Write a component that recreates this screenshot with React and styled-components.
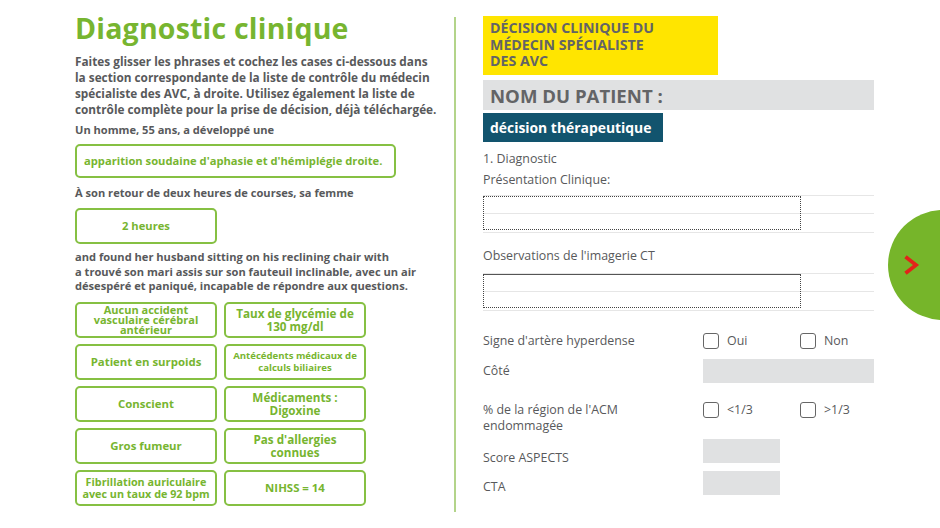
import React from "react";
import styled, { createGlobalStyle } from "styled-components";

const GlobalStyle = createGlobalStyle`
	html, body {
		margin: 0;
		padding: 0;
		background: #fff;
	}
	body {
		font-family: "Open Sans", "Liberation Sans", sans-serif;
		color: #58595b;
	}
`;

const GREEN = "#77b530";
const GREY = "#58595b";

const Page = styled.div`
	position: relative;
	display: flex;
	width: 940px;
	height: 528px;
	overflow: hidden;
`;

const LeftCol = styled.div`
	flex: none;
	width: 379px;
	margin-left: 75px;
	padding-top: 10px;
	box-sizing: border-box;
`;

const Title = styled.h1`
	margin: 0;
	font-size: 28.5px;
	line-height: 36px;
	font-weight: 700;
	color: ${GREEN};
	letter-spacing: 0.2px;
`;

const Para = styled.p`
	margin: ${p => p.margin || "0"};
	font-size: ${p => p.size || "11.1px"};
	line-height: ${p => p.lh || "16px"};
	font-weight: 700;
	color: ${GREY};
	white-space: nowrap;
`;

const DropBox = styled.div`
	box-sizing: border-box;
	width: ${p => p.width || "142px"};
	height: ${p => p.height || "36px"};
	margin: ${p => p.margin || "0"};
	border: 2.5px solid #86c043;
	border-radius: 5px;
	display: flex;
	align-items: center;
	justify-content: ${p => (p.left ? "flex-start" : "center")};
	padding: 0 ${p => (p.left ? "7px" : "2px")};
	font-size: ${p => p.size || "11.2px"};
	line-height: ${p => p.lh || "12px"};
	font-weight: 700;
	color: ${GREEN};
	text-align: center;
	white-space: pre-line;
`;

const Grid = styled.div`
	display: grid;
	grid-template-columns: 142px 142px;
	grid-auto-rows: 36px;
	column-gap: 7px;
	row-gap: 6px;
	margin-top: 8px;
`;

const Divider = styled.div`
	flex: none;
	width: 2px;
	height: 495px;
	margin-top: 17px;
	background: #b3d48a;
`;

const RightCol = styled.div`
	flex: none;
	width: 391px;
	margin-left: 27px;
	padding-top: 16px;
`;

const Yellow = styled.div`
	box-sizing: border-box;
	width: 235px;
	height: 59px;
	background: #ffe500;
	padding: 4px 7px;
	font-size: 14.2px;
	line-height: 16.5px;
	font-weight: 700;
	color: #636466;
`;

const NameBar = styled.div`
	box-sizing: border-box;
	height: 30px;
	margin-top: 5px;
	background: #e0e1e2;
	padding-left: 7px;
	display: flex;
	align-items: center;
	font-size: 18.6px;
	font-weight: 700;
	color: #636466;
`;

const TealTag = styled.div`
	box-sizing: border-box;
	width: 180px;
	height: 29px;
	margin-top: 3px;
	background: #12546e;
	padding-left: 7px;
	display: flex;
	align-items: center;
	font-size: 13.9px;
	font-weight: 700;
	color: #fff;
`;

const Label = styled.div`
	font-size: 12.4px;
	line-height: 16px;
	color: ${GREY};
	margin: ${p => p.margin || "0"};
`;

const Lined = styled.div`
	position: relative;
	height: 37px;
	margin-top: ${p => p.mt || "0"};
	background: repeating-linear-gradient(
		to bottom,
		#e6e6e6 0,
		#e6e6e6 1px,
		transparent 1px,
		transparent 18.5px
	);
	border-bottom: 1px solid #e6e6e6;
`;

const DashBox = styled.div`
	position: absolute;
	left: 0;
	top: 1px;
	width: 318px;
	height: 34px;
	box-sizing: border-box;
	border: 1px dotted #444;
	border-top: 1px ${p => (p.solid ? "solid #555" : "dotted #444")};
`;

const Row = styled.div`
	display: flex;
	align-items: ${p => (p.top ? "flex-start" : "center")};
	height: ${p => p.height || "auto"};
	margin-top: ${p => p.mt || "0"};
`;

const RowLabel = styled.div`
	flex: none;
	width: 220px;
	padding-top: ${p => p.offset || "0"};
	font-size: 12.4px;
	line-height: 15.5px;
	color: ${GREY};
`;

const Check = styled.label`
	flex: none;
	display: flex;
	align-items: center;
	width: 97px;
	font-size: 12.4px;
	line-height: 16px;
	color: ${GREY};
`;

const Box = styled.span`
	display: inline-block;
	width: 14px;
	height: 14px;
	border: 1px solid #666;
	border-radius: 3px;
	margin-right: 8px;
`;

const GreyField = styled.div`
	flex: none;
	width: ${p => p.width || "171px"};
	height: ${p => p.height || "24px"};
	background: #e0e1e2;
`;

const NextButton = styled.button`
	position: absolute;
	left: 888px;
	top: 210px;
	width: 110px;
	height: 110px;
	border: none;
	border-radius: 50%;
	background: #76b52a;
	padding: 0 0 0 15px;
	display: flex;
	align-items: center;
	cursor: pointer;
`;

const cards = [
	["Aucun accident\nvasculaire cérébral\nantérieur", "11px", "10px"],
	["Taux de glycémie de\n130 mg/dl", "11.7px", "13px"],
	["Patient en surpoids", "11.4px", "12px"],
	["Antécédents médicaux de\ncalculs biliaires", "9.6px", "12px"],
	["Conscient", "11.4px", "12px"],
	["Médicaments :\nDigoxine", "11.7px", "13px"],
	["Gros fumeur", "11.4px", "12px"],
	["Pas d'allergies\nconnues", "11.7px", "13px"],
	["Fibrillation auriculaire\navec un taux de 92 bpm", "10.8px", "12px"],
	["NIHSS = 14", "11.4px", "12px"],
];

export default function App() {
	return (
		<Page>
			<GlobalStyle />
			<LeftCol>
				<Title>Diagnostic clinique</Title>
				<Para margin="7px 0 0" size="11.8px">
					Faites glisser les phrases et cochez les cases ci-dessous dans
					<br />
					la section correspondante de la liste de contrôle du médecin
					<br />
					spécialiste des AVC, à droite. Utilisez également la liste de
					<br />
					contrôle complète pour la prise de décision, déjà téléchargée.
				</Para>
				<Para margin="5px 0 0">Un homme, 55 ans, a développé une</Para>
				<DropBox width="321px" height="34px" left margin="6px 0 0">
					apparition soudaine d'aphasie et d'hémiplégie droite.
				</DropBox>
				<Para margin="7px 0 0">À son retour de deux heures de courses, sa femme</Para>
				<DropBox margin="7px 0 0">2 heures</DropBox>
				<Para margin="6px 0 0" lh="14.5px">
					and found her husband sitting on his reclining chair with
					<br />
					a trouvé son mari assis sur son fauteuil inclinable, avec un air
					<br />
					désespéré et paniqué, incapable de répondre aux questions.
				</Para>
				<Grid>
					{cards.map(([text, size, lh]) => (
						<DropBox key={text} size={size} lh={lh}>
							{text}
						</DropBox>
					))}
				</Grid>
			</LeftCol>
			<Divider />
			<RightCol>
				<Yellow>
					DÉCISION CLINIQUE DU
					<br />
					MÉDECIN SPÉCIALISTE
					<br />
					DES AVC
				</Yellow>
				<NameBar>NOM DU PATIENT :</NameBar>
				<TealTag>décision thérapeutique</TealTag>
				<Label margin="9px 0 0">1. Diagnostic</Label>
				<Label margin="5px 0 0">Présentation Clinique:</Label>
				<Lined mt="7px">
					<DashBox />
				</Lined>
				<Label margin="15px 0 0">Observations de l'imagerie CT</Label>
				<Lined mt="9px">
					<DashBox solid />
				</Lined>
				<Row mt="21px" height="18px">
					<RowLabel>Signe d'artère hyperdense</RowLabel>
					<Check>
						<Box />
						Oui
					</Check>
					<Check>
						<Box />
						Non
					</Check>
				</Row>
				<Row mt="9px" height="24px">
					<RowLabel>Côté</RowLabel>
					<GreyField />
				</Row>
				<Row top mt="19px" height="32px">
					<RowLabel>
						% de la région de l'ACM
						<br />
						endommagée
					</RowLabel>
					<Check>
						<Box />
						&lt;1/3
					</Check>
					<Check>
						<Box />
						&gt;1/3
					</Check>
				</Row>
				<Row mt="5px" height="24px">
					<RowLabel offset="14px">Score ASPECTS</RowLabel>
					<GreyField width="77px" />
				</Row>
				<Row mt="8px" height="24px">
					<RowLabel offset="7px">CTA</RowLabel>
					<GreyField width="77px" />
				</Row>
			</RightCol>
			<NextButton aria-label="Suivant">
				<svg width="18" height="22" viewBox="0 0 18 22">
					<path
						d="M4 4 L13 11 L4 18"
						fill="none"
						stroke="#e2231a"
						strokeWidth="3.8"
						strokeLinecap="square"
					/>
				</svg>
			</NextButton>
		</Page>
	);
}
